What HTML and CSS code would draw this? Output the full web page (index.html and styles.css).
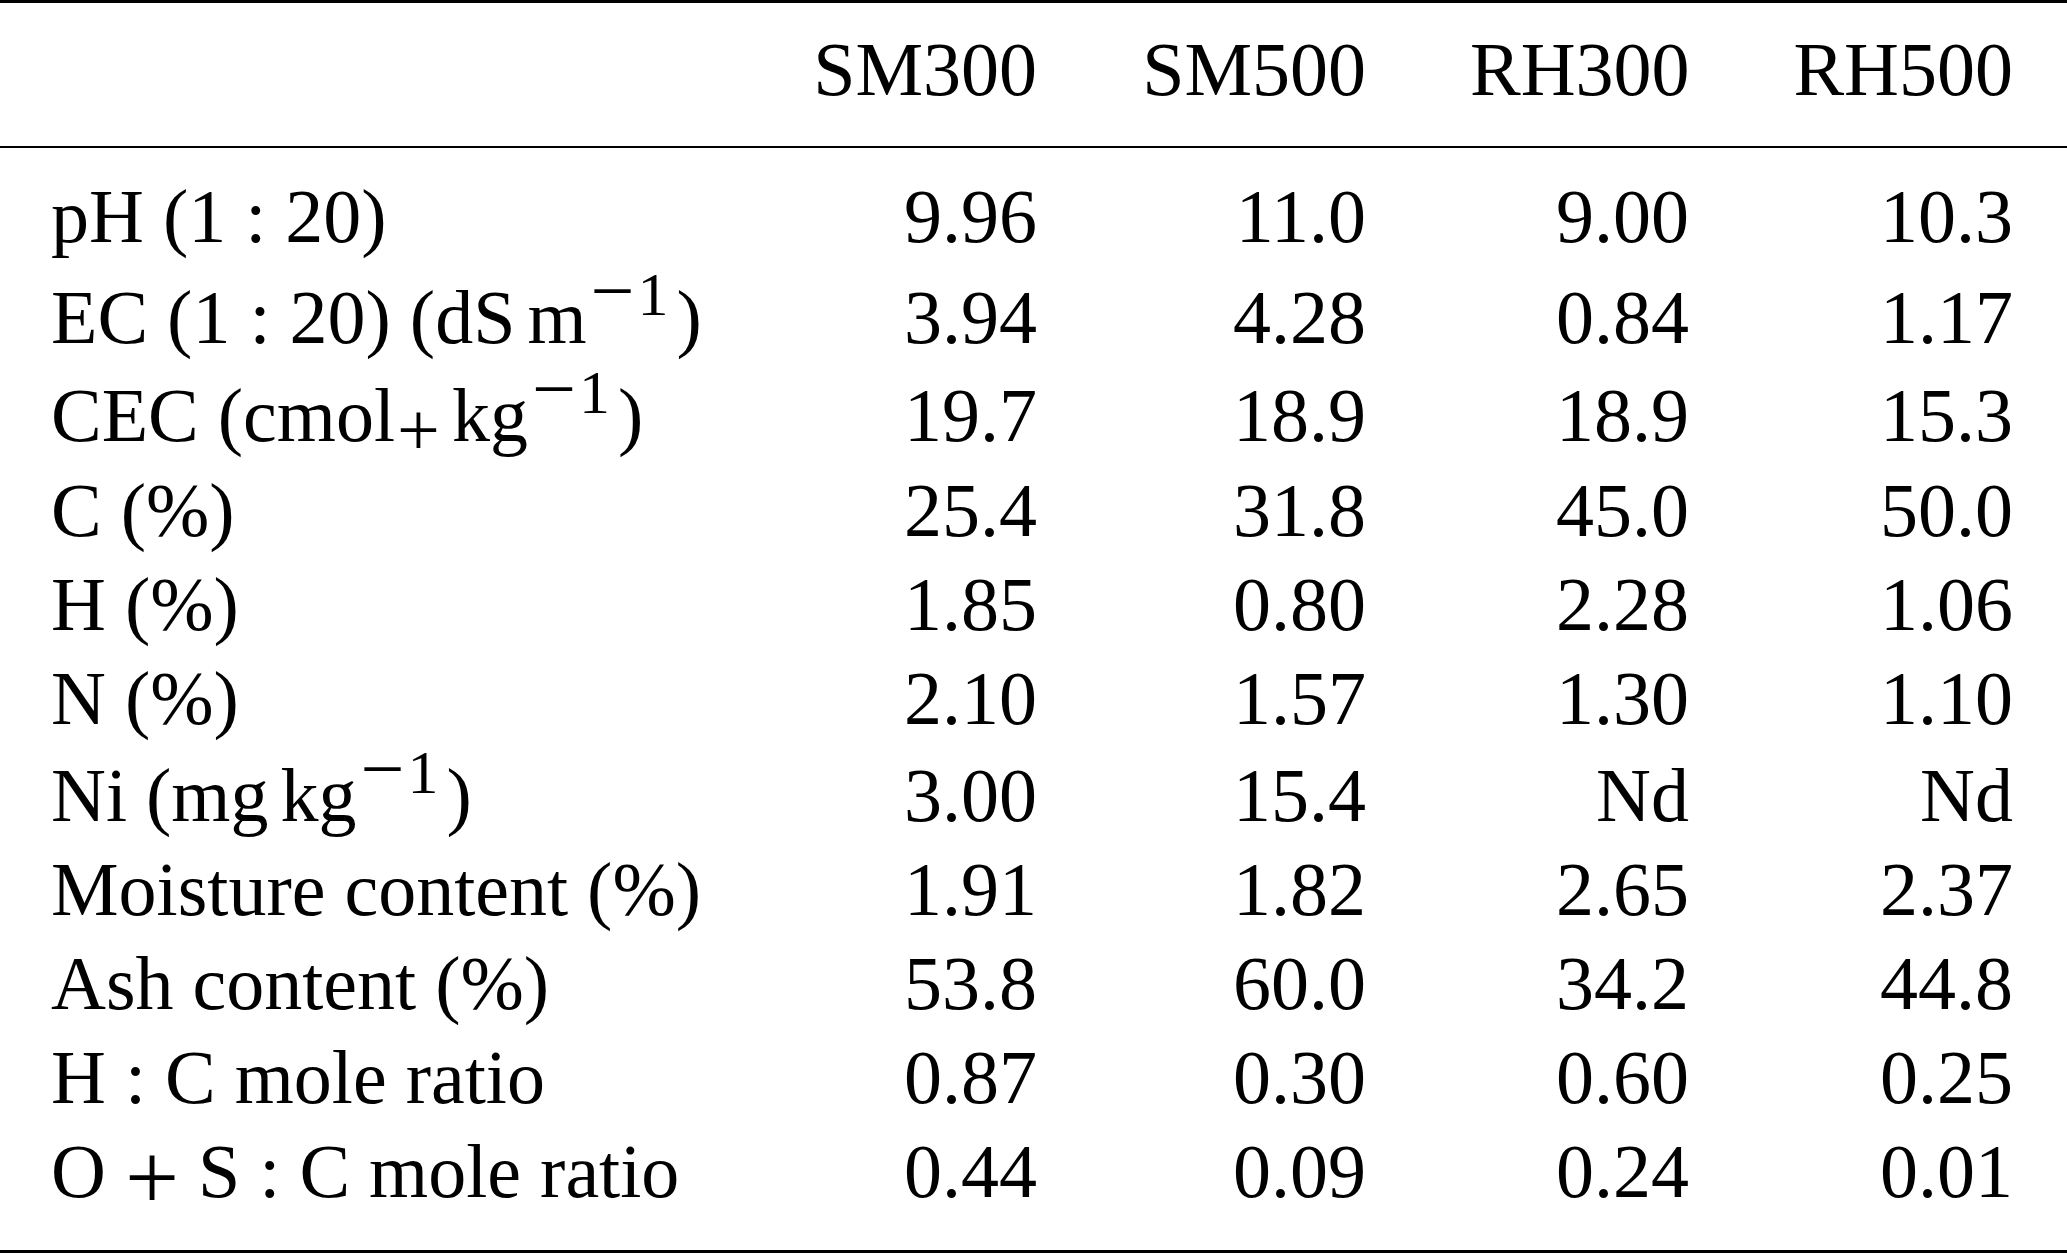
FILE: index.html
```html
<!DOCTYPE html>
<html>
<head>
<meta charset="utf-8">
<link rel="stylesheet" href="styles.css">
</head>
<body>
<div class="table">
  <div class="row head">
    <div class="label"></div>
    <div class="num">SM300</div>
    <div class="num">SM500</div>
    <div class="num">RH300</div>
    <div class="num">RH500</div>
  </div>
  <div class="body">
    <div class="row">
      <div class="label">pH (1 : 20)</div>
      <div class="num">9.96</div><div class="num">11.0</div><div class="num">9.00</div><div class="num">10.3</div>
    </div>
    <div class="row r-ec">
      <div class="label">EC (1 : 20) (dS<span class="thin"></span>m<span class="sup"><span class="minus">−</span><span class="one">1</span></span>)</div>
      <div class="num">3.94</div><div class="num">4.28</div><div class="num">0.84</div><div class="num">1.17</div>
    </div>
    <div class="row r-cec">
      <div class="label">CEC (cmol<span class="sub">+</span><span class="thin"></span>kg<span class="sup"><span class="minus">−</span><span class="one">1</span></span>)</div>
      <div class="num">19.7</div><div class="num">18.9</div><div class="num">18.9</div><div class="num">15.3</div>
    </div>
    <div class="row">
      <div class="label">C (%)</div>
      <div class="num">25.4</div><div class="num">31.8</div><div class="num">45.0</div><div class="num">50.0</div>
    </div>
    <div class="row">
      <div class="label">H (%)</div>
      <div class="num">1.85</div><div class="num">0.80</div><div class="num">2.28</div><div class="num">1.06</div>
    </div>
    <div class="row">
      <div class="label">N (%)</div>
      <div class="num">2.10</div><div class="num">1.57</div><div class="num">1.30</div><div class="num">1.10</div>
    </div>
    <div class="row r-ni">
      <div class="label">Ni (mg<span class="thin"></span>kg<span class="sup"><span class="minus">−</span><span class="one">1</span></span>)</div>
      <div class="num">3.00</div><div class="num">15.4</div><div class="num">Nd</div><div class="num">Nd</div>
    </div>
    <div class="row">
      <div class="label">Moisture content (%)</div>
      <div class="num">1.91</div><div class="num">1.82</div><div class="num">2.65</div><div class="num">2.37</div>
    </div>
    <div class="row">
      <div class="label">Ash content (%)</div>
      <div class="num">53.8</div><div class="num">60.0</div><div class="num">34.2</div><div class="num">44.8</div>
    </div>
    <div class="row">
      <div class="label">H : C mole ratio</div>
      <div class="num">0.87</div><div class="num">0.30</div><div class="num">0.60</div><div class="num">0.25</div>
    </div>
    <div class="row">
      <div class="label">O <span class="plus">+</span> S : C mole ratio</div>
      <div class="num">0.44</div><div class="num">0.09</div><div class="num">0.24</div><div class="num">0.01</div>
    </div>
  </div>
</div>
</body>
</html>
```
FILE: styles.css
```css
html, body {
  margin: 0;
  padding: 0;
  background: #fff;
}

body {
  font-family: "Liberation Serif", "Times New Roman", serif;
  font-size: 76px;
  color: #000;
}

.table {
  width: 2067px;
  border-top: 3px solid #000;
  border-bottom: 3px solid #000;
}

.row {
  display: grid;
  grid-template-columns: 1fr 224px 225px 219px 220px;
  column-gap: 104px;
  padding: 0 54px 0 51px;
  height: 94px;
  line-height: 94px;
}

.head {
  padding-top: 19px;
  padding-bottom: 30px;
  border-bottom: 2px solid #000;
}

.body {
  padding-top: 21px;
  padding-bottom: 32px;
}

.r-ec {
  padding-top: 7px;
}

.r-cec {
  padding-top: 4px;
  padding-bottom: 1px;
}

.r-ni {
  padding-top: 3px;
}

.label {
  white-space: nowrap;
}

.num {
  text-align: right;
  white-space: nowrap;
}

.thin {
  display: inline-block;
  width: 12px;
}

.sup {
  font-size: 62px;
  line-height: 0;
  vertical-align: 28px;
  margin-left: 4px;
  margin-right: 8px;
}

.sup .minus {
  font-size: 78px;
  line-height: 0;
  vertical-align: -2px;
}

.sup .one {
  margin-left: 3px;
}

.sub {
  font-size: 76px;
  line-height: 0;
  vertical-align: -14px;
  margin-left: 2px;
}

.plus {
  font-size: 96px;
  line-height: 0;
  vertical-align: -12px;
}
```
